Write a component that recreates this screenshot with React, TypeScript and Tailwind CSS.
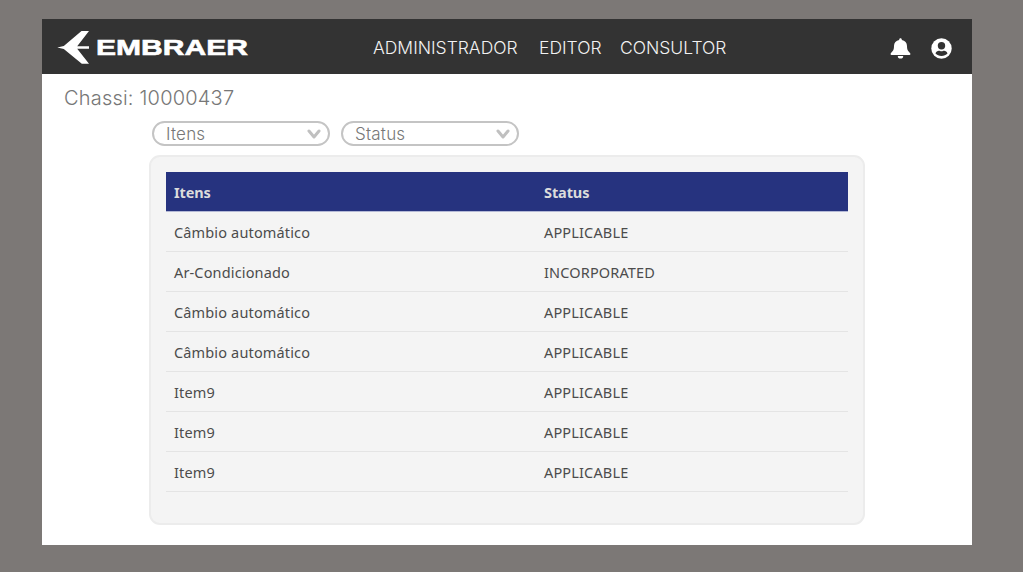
import React from "react";

const rows = [
  ["Câmbio automático", "APPLICABLE"],
  ["Ar-Condicionado", "INCORPORATED"],
  ["Câmbio automático", "APPLICABLE"],
  ["Câmbio automático", "APPLICABLE"],
  ["Item9", "APPLICABLE"],
  ["Item9", "APPLICABLE"],
  ["Item9", "APPLICABLE"],
];

function Logo() {
  return (
    <svg width="194" height="37" viewBox="0 0 194 37" className="shrink-0" role="img" aria-label="Embraer">
      <path
        d="M0.3 19.5 L6.8 18 L24.5 3.1 H32 L20.2 18.2 H32 V20.8 H20.2 L32 35.7 H24.8 L6.8 21.1 Z"
        fill="#fff"
      />
      <text
        x="39"
        y="27.4"
        textLength="152"
        lengthAdjust="spacingAndGlyphs"
        fontFamily="'Liberation Sans', Arial, sans-serif"
        fontWeight="700"
        fontSize="22.8"
        fill="#fff"
        stroke="#fff"
        strokeWidth="0.6"
      >
        EMBRAER
      </text>
    </svg>
  );
}

function Bell() {
  return (
    <svg width="21" height="21" viewBox="0 0 21 21" fill="#fff">
      <path d="M10.5 0.2c-.8 0-1.3.6-1.3 1.3v.6C6 2.7 4 5 4 8.1c0 4-1.1 5-3 6.9-.8.8-.5 2 .5 2h18c1 0 1.3-1.2.5-2-1.9-1.9-3-2.900-3-6.900 0-3.100-2-5.400-5.200-6v-.6c0-.7-.5-1.300-1.300-1.300ZM7.800 18a2.700 2.600 0 0 0 5.400 0Z" />
    </svg>
  );
}

function User() {
  return (
    <svg width="21" height="21" viewBox="0 0 21 21">
      <circle cx="10.5" cy="10.5" r="10.2" fill="#fff" />
      <circle cx="10.5" cy="7.8" r="3.7" fill="#333" />
      <path d="M4.5 15.6c.5-2 2-2.8 3.4-2.8.8 0 1.4.5 2.6.5s1.8-.5 2.6-.5c1.4 0 2.9.8 3.4 2.8-1.5 1.6-3.6 2.5-6 2.5s-4.5-.9-6-2.5Z" fill="#333" />
    </svg>
  );
}

function Select({ label }: { label: string }) {
  return (
    <button className="flex h-[25px] w-[178px] items-center justify-between rounded-full border-2 border-[#c4c4c4] bg-white pr-[7px] pl-[12px] text-[17px] font-[350] leading-[23px] tracking-[0.2px] text-[#777]">
      <span className="pt-px">{label}</span>
      <svg width="14" height="12" viewBox="0 0 14 12" fill="none" stroke="#c0c0c0" strokeWidth="3" strokeLinecap="round" strokeLinejoin="round">
        <path d="M2 3 L7 9 L12 3" />
      </svg>
    </button>
  );
}

export default function App() {
  return (
    <div className="h-[572px] w-[1023px] overflow-hidden bg-[#7c7876] pt-[19px] pl-[42px] font-['Inter',sans-serif]">
      <div className="flex h-[526px] w-[930px] flex-col bg-white">
        <header className="flex h-[55px] shrink-0 items-center bg-[#333] pl-[15px]">
          <Logo />
          <nav className="ml-[122px] flex pt-[2px] text-[17.5px] font-[350] leading-none text-[#f2f2f2]">
            <a className="w-[166px]">ADMINISTRADOR</a>
            <a className="w-[81px]">EDITOR</a>
            <a>CONSULTOR</a>
          </nav>
          <div className="mr-[20px] ml-auto flex gap-[20px] pt-[4px]">
            <Bell />
            <User />
          </div>
        </header>
        <h1 className="mt-[11px] ml-[22px] h-[26px] shrink-0 text-[20px] font-[350] leading-[26px] tracking-[0.2px] text-[#777]">
          Chassi: 10000437
        </h1>
        <div className="mt-[10px] ml-[110px] flex shrink-0 gap-[11px]">
          <Select label="Itens" />
          <Select label="Status" />
        </div>
        <section className="mt-[9px] ml-[107px] h-[370px] w-[716px] shrink-0 rounded-[11px] border-2 border-[#ececec] bg-[#f4f4f4] px-[15px] pt-[15px]">
          <table className="w-full table-fixed border-separate border-spacing-0 text-left font-['Noto_Sans',sans-serif] text-[14.5px] leading-[20px] tracking-[0.15px] text-[#4c4c4c]">
            <colgroup>
              <col className="w-[370px]" />
              <col />
            </colgroup>
            <thead>
              <tr className="h-[40px] tracking-[-0.1px] text-[#dcdcdc]">
                <th className="border-b border-[#b4b9d6] bg-[#26337f] bg-clip-padding px-[8px] py-0 font-bold">Itens</th>
                <th className="border-b border-[#b4b9d6] bg-[#26337f] bg-clip-padding px-[8px] py-0 font-bold">Status</th>
              </tr>
            </thead>
            <tbody>
              {rows.map(([item, status], i) => (
                <tr key={i} className="h-[40px]">
                  <td className="border-b border-[#e4e4e4] px-[8px] py-0">{item}</td>
                  <td className="border-b border-[#e4e4e4] px-[8px] py-0">{status}</td>
                </tr>
              ))}
            </tbody>
          </table>
        </section>
      </div>
    </div>
  );
}
